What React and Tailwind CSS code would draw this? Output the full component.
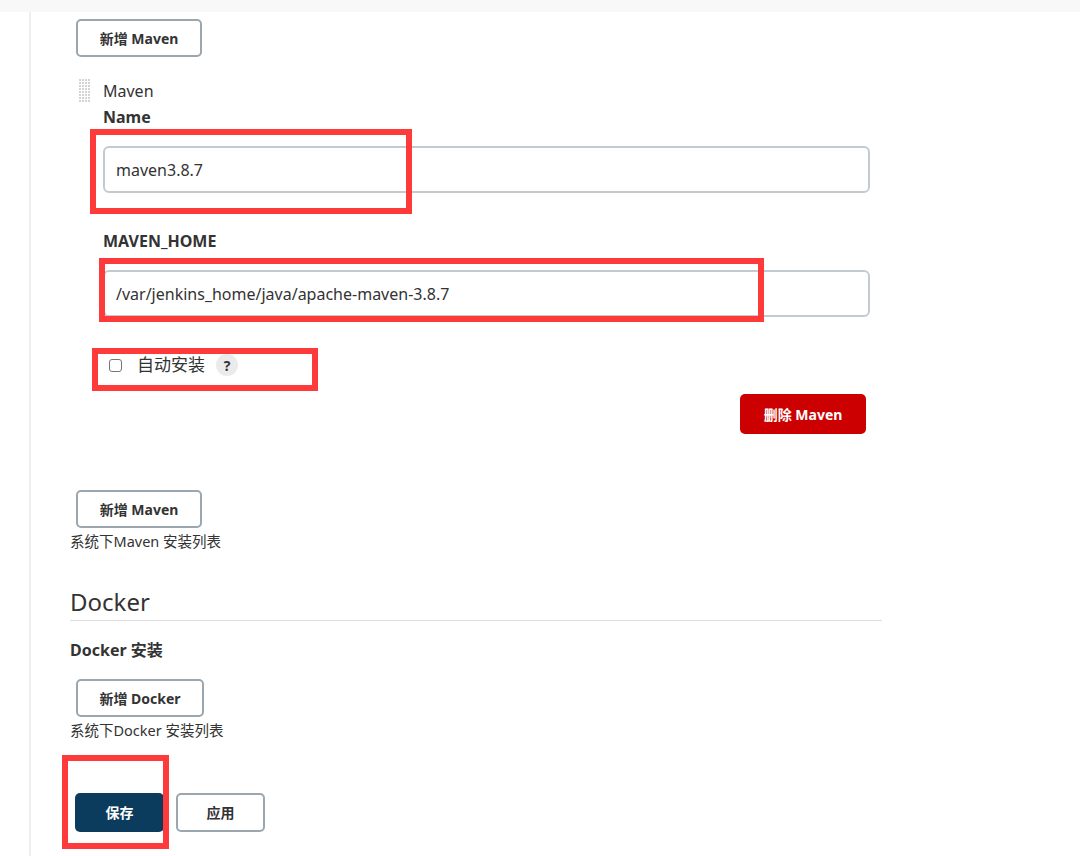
import React from "react";

const font = { fontFamily: '"Noto Sans", "Noto Sans CJK SC", sans-serif' };

function DragHandle() {
  const dots = [];
  for (let r = 0; r < 8; r++) {
    for (let c = 0; c < 4; c++) {
      dots.push(<rect key={r + "-" + c} x={c * 3} y={r * 3} width="2" height="2" fill="#d4d4d4" />);
    }
  }
  return (
    <svg width="12" height="24" viewBox="0 0 12 24" className="shrink-0">
      {dots}
    </svg>
  );
}

function AddButton({ label, w = "w-[126px]" }) {
  return (
    <button className={`${w} h-[38px] border-2 border-[#9ba7b0] rounded-[5px] bg-white text-[14px] font-bold text-[#333] flex items-center justify-center`}>
      {label}
    </button>
  );
}

function Mark({ className }) {
  return <div className={`absolute border-[6px] border-[#fe3a3a] pointer-events-none ${className}`} />;
}

export default function App() {
  return (
    <div className="relative w-[1080px] h-[856px] bg-white overflow-hidden text-[#333]" style={font}>
      <div className="h-[12px] bg-[#f8f8f8]" />
      <div className="flex h-[844px]">
        <div className="w-[29px] shrink-0" />
        <div className="w-[2px] bg-[#eeeeee] shrink-0" />
        <div className="pl-[39px] w-[851px]">
          <div className="pl-[6px] pt-[7px]">
            <AddButton label="新增 Maven" w="w-[126px]" />
          </div>

          <div className="flex pl-[9px] mt-[22px]">
            <DragHandle />
            <div className="ml-[12px] w-[767px]">
              <div className="text-[16px] leading-[24px]">Maven</div>
              <div className="mt-[2px] text-[16px] leading-[24px] font-bold">Name</div>
              <div className="mt-[17px] h-[47px] border-2 border-[#c3cbd1] rounded-[6px] flex items-center px-[11px] text-[16px]">
                maven3.8.7
              </div>
              <div className="mt-[36px] text-[16px] leading-[24px] font-bold">MAVEN_HOME</div>
              <div className="mt-[17px] h-[47px] border-2 border-[#c3cbd1] rounded-[6px] flex items-center px-[11px] text-[16px]">
                /var/jenkins_home/java/apache-maven-3.8.7
              </div>
              <div className="mt-[38px] flex items-center h-[20px] pl-[6px]">
                <span className="w-[13px] h-[13px] border border-[#767676] rounded-[3px] bg-white" />
                <span className="ml-[15px] text-[17px]">自动安装</span>
                <span className="ml-[11px] w-[22px] h-[22px] rounded-full bg-[#ebebeb] flex items-center justify-center text-[14px] font-bold text-[#333]">?</span>
              </div>
              <div className="flex justify-end mt-[19px] pr-[4px]">
                <button className="w-[126px] h-[40px] rounded-[5px] bg-[#cc0000] text-white text-[14px] font-bold">删除 Maven</button>
              </div>
            </div>
          </div>

          <div className="pl-[6px] mt-[56px]">
            <AddButton label="新增 Maven" w="w-[126px]" />
          </div>
          <div className="text-[14.5px] leading-[20px] mt-[3px]">系统下Maven 安装列表</div>

          <div className="mt-[36px] w-[812px] border-b border-[#dddddd] pb-[3px]">
            <div className="text-[24px] leading-[30px]">Docker</div>
          </div>
          <div className="mt-[17px] text-[16px] leading-[24px] font-bold">Docker 安装</div>
          <div className="pl-[6px] mt-[17px]">
            <AddButton label="新增 Docker" w="w-[128px]" />
          </div>
          <div className="text-[14.5px] leading-[20px] mt-[3px]">系统下Docker 安装列表</div>

          <div className="flex gap-[12px] mt-[53px] pl-[5px]">
            <button className="w-[89px] h-[39px] rounded-[5px] bg-[#0b3c5d] text-white text-[14px] font-bold">保存</button>
            <button className="w-[89px] h-[39px] rounded-[5px] border-2 border-[#9ba7b0] bg-white text-[14px] font-bold text-[#333]">应用</button>
          </div>
        </div>
      </div>

      <Mark className="left-[90px] top-[129px] w-[322px] h-[85px]" />
      <Mark className="left-[99px] top-[258px] w-[665px] h-[64px]" />
      <Mark className="left-[92px] top-[348px] w-[226px] h-[43px]" />
      <Mark className="left-[62px] top-[755px] w-[107px] h-[94px]" />
    </div>
  );
}
